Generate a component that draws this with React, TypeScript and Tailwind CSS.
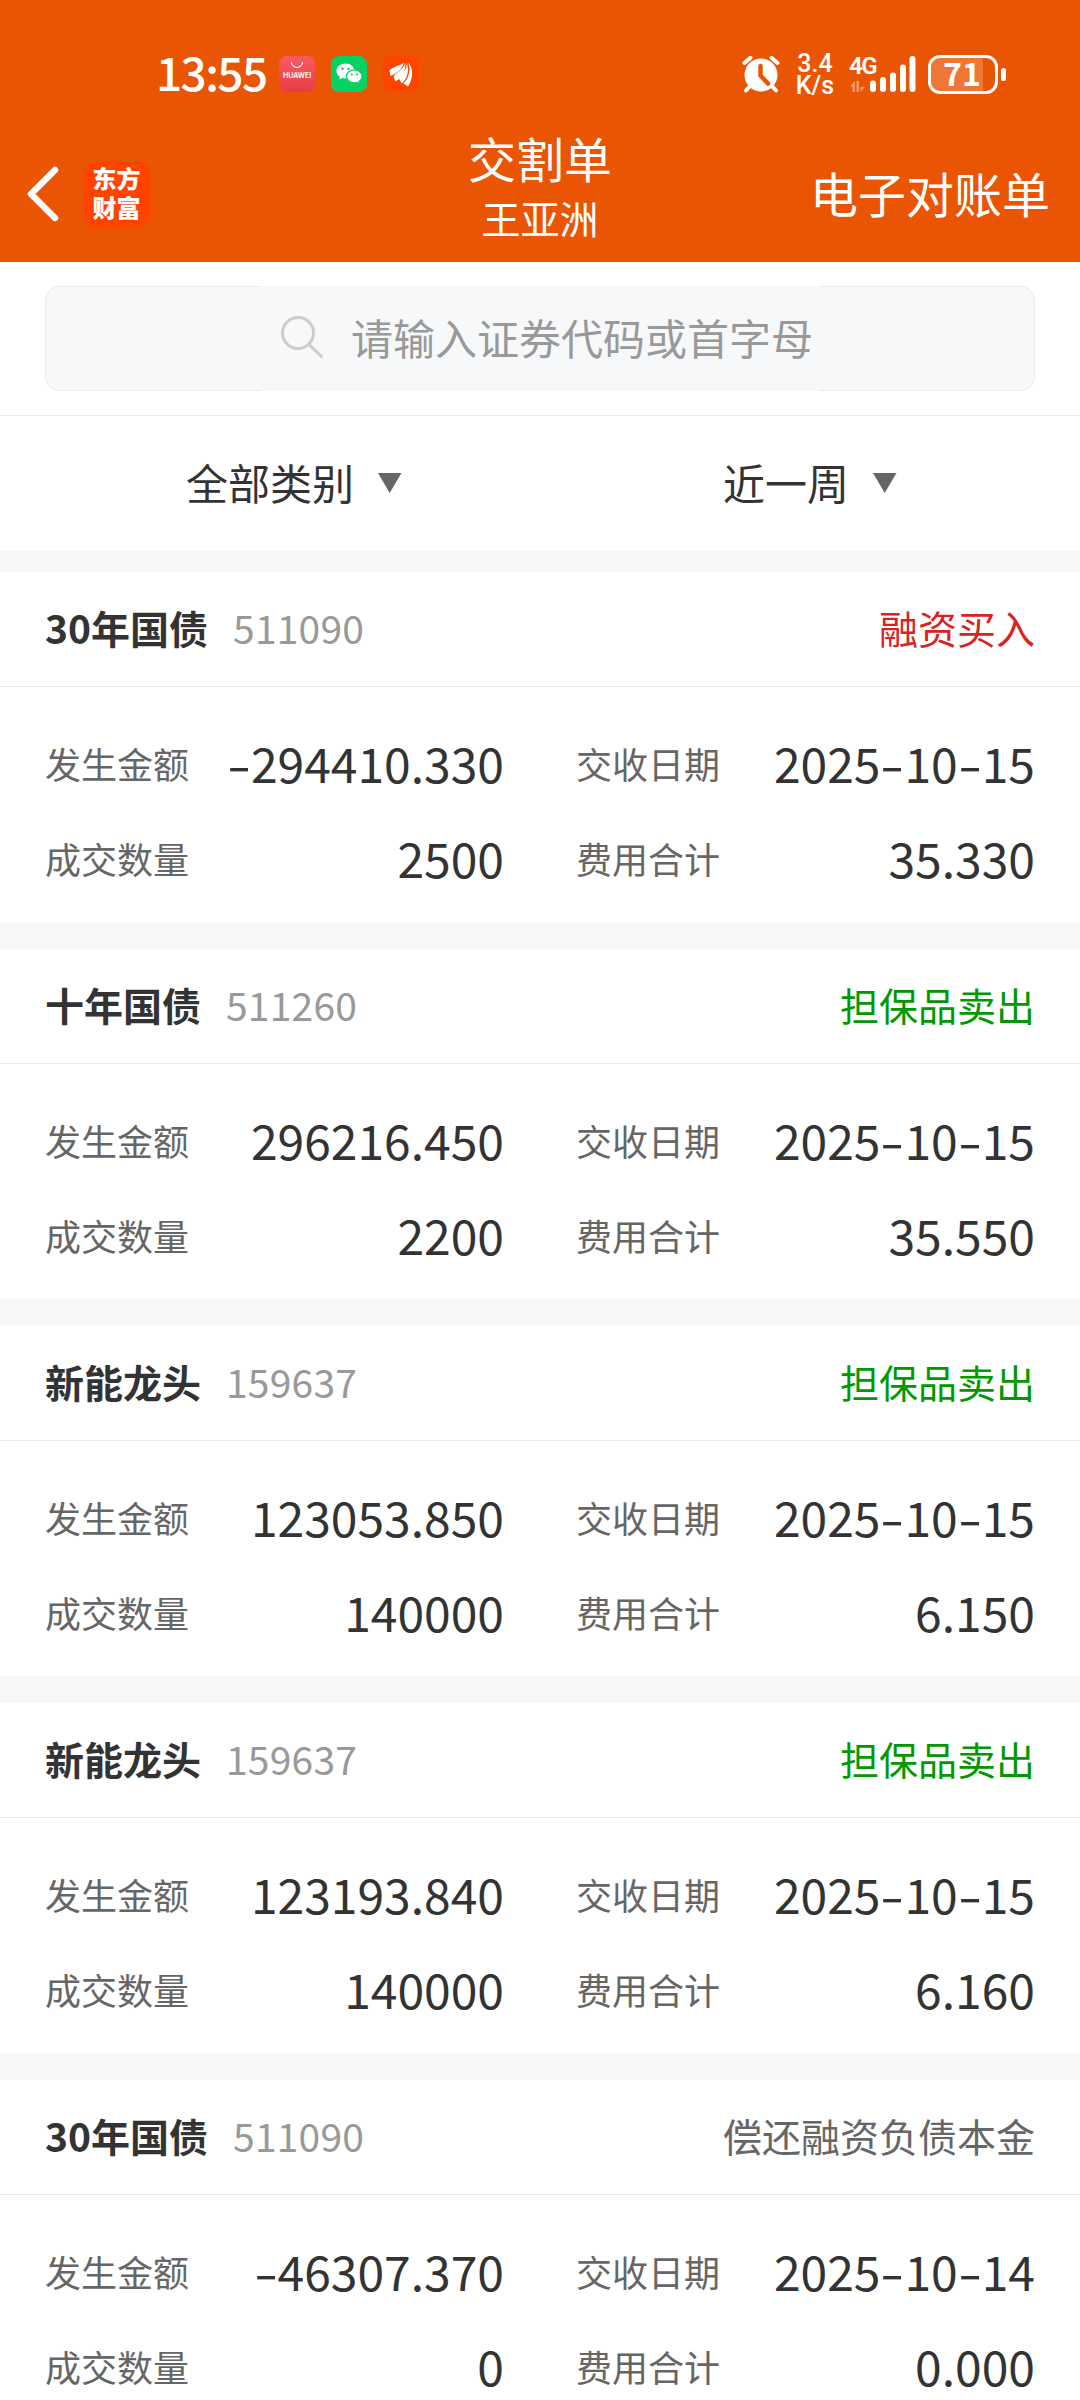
import React from 'react';
import clsx from 'clsx';

interface Trade {
  id: number;
  name: string;
  code: string;
  type: string;
  tone: 'buy' | 'sell' | 'neutral';
  amount: string;
  date: string;
  quantity: string;
  fee: string;
}

const trades: Trade[] = [
  { id: 1, name: '30年国债', code: '511090', type: '融资买入', tone: 'buy', amount: '-294410.330', date: '2025-10-15', quantity: '2500', fee: '35.330' },
  { id: 2, name: '十年国债', code: '511260', type: '担保品卖出', tone: 'sell', amount: '296216.450', date: '2025-10-15', quantity: '2200', fee: '35.550' },
  { id: 3, name: '新能龙头', code: '159637', type: '担保品卖出', tone: 'sell', amount: '123053.850', date: '2025-10-15', quantity: '140000', fee: '6.150' },
  { id: 4, name: '新能龙头', code: '159637', type: '担保品卖出', tone: 'sell', amount: '123193.840', date: '2025-10-15', quantity: '140000', fee: '6.160' },
  { id: 5, name: '30年国债', code: '511090', type: '偿还融资负债本金', tone: 'neutral', amount: '-46307.370', date: '2025-10-14', quantity: '0', fee: '0.000' },
];

const AlarmIcon = () => (
  <svg width="38" height="38" viewBox="0 0 38 38" fill="none" strokeLinecap="round">
    <circle cx="19" cy="20" r="16.5" fill="#fff" />
    <path d="M2.500 8 8.500 2.800M35.500 8 29.500 2.800M8 31l-4 4.500M30 31l4 4.500" stroke="#fff" strokeWidth="4" />
    <path d="M18.500 11v9.500l7.500 8" stroke="#ea5504" strokeWidth="4.500" strokeLinejoin="round" />
  </svg>
);

const SignalIcon = () => (
  <svg width="66" height="38" viewBox="0 0 66 38">
    <path d="M0 31.500 5 26v11H2.500v-5.500zM6.500 26H9v11H6.500zM10.500 26v6H15l-4.500 5z" fill="#fff" opacity=".4" />
    <rect x="20" y="25.5" width="6" height="11.5" rx="3" fill="#fff" />
    <rect x="30" y="22" width="6" height="15" rx="3" fill="#fff" />
    <rect x="40" y="17.5" width="6" height="19.5" rx="3" fill="#fff" />
    <rect x="50" y="9.5" width="6" height="27.5" rx="3" fill="#fff" />
    <rect x="59.5" y="1" width="6" height="36" rx="3" fill="#fff" />
  </svg>
);

const WechatIcon = () => (
  <svg width="36" height="36" viewBox="0 0 36 36">
    <rect width="36" height="36" rx="8" fill="#07d160" />
    <path d="M14.5 7.5C9.500 7.500 5.500 10.800 5.500 15c0 2.400 1.300 4.500 3.400 5.900l-.8 2.700 3.200-1.600c1 .3 2.100.4 3.200.4C19.500 22.400 23.500 19.200 23.500 15s-4-7.500-9-7.500z" fill="#fff" />
    <path d="M23.300 13.800c-4.400 0-7.900 2.900-7.900 6.500s3.500 6.500 7.900 6.500c1 0 1.900-.1 2.700-.4l2.600 1.400-.6-2.400c1.900-1.200 3.100-3 3.100-5.100 0-3.600-3.500-6.500-7.800-6.500z" fill="#fff" stroke="#07d160" strokeWidth="1.200" />
    <g fill="#07d160">
      <circle cx="11.500" cy="12.800" r="1.200" />
      <circle cx="17.500" cy="12.800" r="1.200" />
      <circle cx="20.800" cy="18.500" r="1" />
      <circle cx="26" cy="18.500" r="1" />
    </g>
  </svg>
);

const EastMoneyIcon = () => (
  <svg width="36" height="36" viewBox="0 0 36 36">
    <rect width="36" height="36" rx="8" fill="#ff4400" />
    <g fill="#fff">
      <path d="M20.800 6.500C17 10 10 10.500 6.500 14.500l1 5.500C13.500 17.500 19.500 13.500 20.800 6.500z" />
      <path d="M22.200 6.500C21.500 13.500 13 16 10.500 20.500l2 5C18 22.500 23.300 15 22.200 6.500z" />
      <path d="M23.600 6.500C25 13.500 18 18 16 23l3 4.500C24 22.500 27 14 23.600 6.500z" />
      <path d="M25.200 6.500C30.500 12 30.500 22 25 30.500l-4.500-3C26 21.500 28 14 25.200 6.500z" />
    </g>
  </svg>
);

const StatusBar = () => (
  <div className="flex h-[96px] items-end justify-between pt-[50px] pr-[74px] pb-[2px] pl-[156px] text-white">
    <div className="flex h-[40px] items-center">
      <span className="w-[123px] pb-[6px] text-[46px] leading-none font-medium tracking-[-1.6px] whitespace-nowrap">13:55</span>
      <div className="flex gap-[16px]">
        <div className="flex size-[36px] flex-col items-center rounded-[8px] bg-linear-to-b from-[#fb5a60] to-[#e93a48] pt-[5px]">
          <svg width="14" height="8" viewBox="0 0 14 8" fill="none" stroke="#fff" strokeWidth="1.100">
            <path d="M1.500 1a5.500 5.500 0 0 0 11 0" />
          </svg>
          <span className="mt-[2px] font-['Inter'] text-[7px] leading-[10px] font-semibold">HUAWEI</span>
        </div>
        <WechatIcon />
        <EastMoneyIcon />
      </div>
    </div>
    <div className="flex h-[40px] items-center">
      <AlarmIcon />
      <div className="ml-[16px] flex w-[38px] flex-col items-center pt-[2px] font-['Roboto'] text-[25px] leading-[22px] font-medium">
        <span>3.4</span>
        <span>K/s</span>
      </div>
      <div className="relative ml-[16px]">
        <SignalIcon />
        <span className="absolute -top-[2px] -left-px font-['Roboto'] text-[24px] leading-[26px] font-semibold tracking-[-1.5px]">4G</span>
      </div>
      <div className="ml-[12px] flex items-center gap-[3px]">
        <div className="relative flex h-[39px] w-[70px] items-center justify-center rounded-[12px] border-[3px] border-white">
          <div className="absolute inset-y-0 left-0 w-[52px] rounded-l-[9px] bg-white/20" />
          <span className="relative pr-[2px] pb-[5px] text-[32px] leading-[36px] font-bold">71</span>
        </div>
        <div className="h-[13px] w-[5px] rounded-full bg-white" />
      </div>
    </div>
  </div>
);

const NavBar = () => (
  <div className="grid h-[166px] grid-cols-3 items-center pr-[30px] pl-[26px] text-white">
    <div className="flex items-center gap-[24px] pt-[30px]">
      <svg width="34" height="56" viewBox="0 0 34 56" fill="none" stroke="#fff" strokeWidth="6.500" strokeLinecap="round" strokeLinejoin="round">
        <path d="M29 4 5 28l24 24" />
      </svg>
      <div className="flex size-[67px] flex-col items-center justify-center rounded-[15px] bg-[#ff4400] pr-[2px] pb-[5px] text-[24px] leading-[29px] font-black">
        <span>东方</span>
        <span>财富</span>
      </div>
    </div>
    <div className="flex flex-col items-center pt-[11px] pl-[4px]">
      <h1 className="text-[48px] leading-[64px]">交割单</h1>
      <p className="text-[39px] leading-[56px]">王亚洲</p>
    </div>
    <span className="justify-self-end pt-[25px] text-[48px] leading-[64px] whitespace-nowrap">电子对账单</span>
  </div>
);

const SearchBar = () => (
  <div className="flex h-[105px]">
    <div className="w-[216px] rounded-l-[15px] border-y border-l border-[#ebebeb] bg-[#f7f8fa]" />
    <div className="flex flex-1 items-center gap-[27px] bg-[#f7f8fa] pl-[19px]">
      <svg width="44" height="44" viewBox="0 0 44 44" fill="none" stroke="#ccc" strokeWidth="3" strokeLinecap="round" className="-mt-[3px] shrink-0">
        <circle cx="18" cy="18" r="15.500" />
        <path d="m29 29.500 12.500 12" />
      </svg>
      <span className="pb-[3px] text-[42px] leading-[60px] whitespace-nowrap text-[#999]">请输入证券代码或首字母</span>
    </div>
    <div className="w-[216px] rounded-r-[15px] border-y border-r border-[#ebebeb] bg-[#f7f8fa]" />
  </div>
);

const Filter: React.FC<{ label: string }> = ({ label }) => (
  <button className="flex items-center gap-[24px] text-[42px] leading-[60px] text-[#333]">
    <span className="pb-[3px]">{label}</span>
    <svg width="24" height="20" viewBox="0 0 24 20" className="-mt-[2px]">
      <path d="M0 0h23.500L11.700 20z" fill="#666" />
    </svg>
  </button>
);

// Hyphens get a wider cell than the font gives them
const Value: React.FC<{ text: string }> = ({ text }) => (
  <span className="text-[48px] leading-[95px] whitespace-nowrap text-[#333]">
    {text.split('').map((char, index) =>
      char === '-' ? (
        <span key={index} className="inline-block w-[24px] scale-x-[1.45] text-center">-</span>
      ) : (
        char
      )
    )}
  </span>
);

const Field: React.FC<{ label: string; value: string }> = ({ label, value }) => (
  <div className="flex h-[95px] items-center justify-between">
    <span className="text-[36px] text-[#666]">{label}</span>
    <Value text={value} />
  </div>
);

const TradeCard: React.FC<{ trade: Trade }> = ({ trade }) => (
  <section className="h-[350px] shrink-0 bg-white">
    <div className="flex h-[115px] items-center justify-between border-b border-[#ebebeb] px-[45px] pb-[3px] text-[39px]">
      <div className="flex items-center gap-[25px]">
        <h2 className="font-bold text-[#333]">{trade.name}</h2>
        <span className="tracking-[0.2px] text-[#999]">{trade.code}</span>
      </div>
      <span
        className={clsx(
          trade.tone === 'buy' && 'text-[#d92323]',
          trade.tone === 'sell' && 'text-[#009900]',
          trade.tone === 'neutral' && 'text-[#666]'
        )}
      >
        {trade.type}
      </span>
    </div>
    <div className="grid grid-cols-2 gap-x-[72px] px-[45px] pt-[28px]">
      <Field label="发生金额" value={trade.amount} />
      <Field label="交收日期" value={trade.date} />
      <Field label="成交数量" value={trade.quantity} />
      <Field label="费用合计" value={trade.fee} />
    </div>
  </section>
);

const App: React.FC = () => {
  return (
    <div className="flex h-[2400px] w-[1080px] flex-col overflow-hidden bg-[#f7f8fa] font-['Noto_Sans_CJK_SC',sans-serif]">
      <header className="h-[262px] shrink-0 bg-[#ea5504]">
        <StatusBar />
        <NavBar />
      </header>

      {/* Search */}
      <div className="h-[154px] shrink-0 border-b border-[#ebebeb] bg-white px-[45px] pt-[24px]">
        <SearchBar />
      </div>

      {/* Filters */}
      <div className="grid h-[135px] shrink-0 grid-cols-2 bg-white">
        <div className="flex items-center justify-center pl-[48px]">
          <Filter label="全部类别" />
        </div>
        <div className="flex items-center justify-center">
          <Filter label="近一周" />
        </div>
      </div>

      {/* Trade list */}
      <main className="mt-[21px] flex flex-col gap-[27px]">
        {trades.map(trade => (
          <TradeCard key={trade.id} trade={trade} />
        ))}
      </main>
    </div>
  );
};

export default App;
